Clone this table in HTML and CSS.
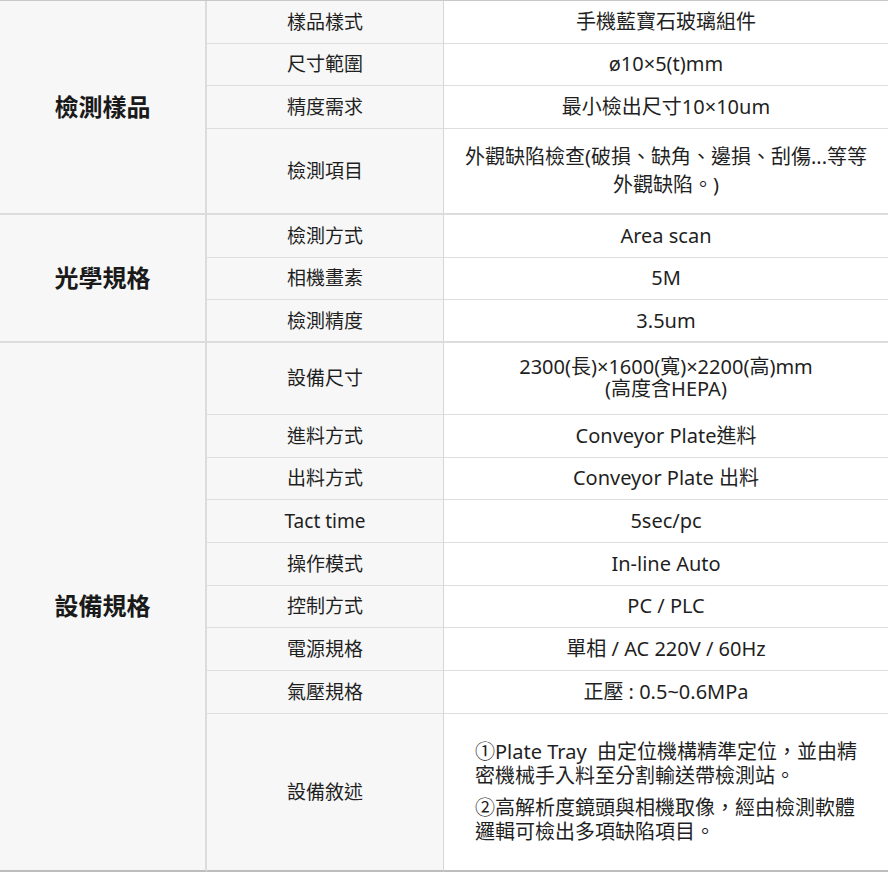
FILE: index.html
```html
<!DOCTYPE html>
<html lang="zh-Hant">
<head>
<meta charset="utf-8">
<title>規格表</title>
<link rel="stylesheet" href="styles.css">
</head>
<body>
<table class="spec">
  <tbody>
    <tr class="row">
      <td class="grp grp-end" rowspan="4">檢測樣品</td>
      <td class="key">樣品樣式</td>
      <td class="val">手機藍寶石玻璃組件</td>
    </tr>
    <tr class="row">
      <td class="key">尺寸範圍</td>
      <td class="val">ø10×5(t)mm</td>
    </tr>
    <tr class="row">
      <td class="key">精度需求</td>
      <td class="val">最小檢出尺寸10×10um</td>
    </tr>
    <tr class="row tall-a end">
      <td class="key">檢測項目</td>
      <td class="val multi">外觀缺陷檢查(破損、缺角、邊損、刮傷...等等<br>外觀缺陷。)</td>
    </tr>

    <tr class="row">
      <td class="grp grp-end" rowspan="3">光學規格</td>
      <td class="key">檢測方式</td>
      <td class="val">Area scan</td>
    </tr>
    <tr class="row">
      <td class="key">相機畫素</td>
      <td class="val">5M</td>
    </tr>
    <tr class="row end">
      <td class="key">檢測精度</td>
      <td class="val">3.5um</td>
    </tr>

    <tr class="row tall-b">
      <td class="grp grp-last" rowspan="9">設備規格</td>
      <td class="key">設備尺寸</td>
      <td class="val multi-s">2300(長)×1600(寬)×2200(高)mm<br>(高度含HEPA)</td>
    </tr>
    <tr class="row">
      <td class="key">進料方式</td>
      <td class="val">Conveyor Plate進料</td>
    </tr>
    <tr class="row">
      <td class="key">出料方式</td>
      <td class="val">Conveyor Plate 出料</td>
    </tr>
    <tr class="row">
      <td class="key">Tact time</td>
      <td class="val">5sec/pc</td>
    </tr>
    <tr class="row">
      <td class="key">操作模式</td>
      <td class="val">In-line Auto</td>
    </tr>
    <tr class="row">
      <td class="key">控制方式</td>
      <td class="val">PC / PLC</td>
    </tr>
    <tr class="row">
      <td class="key">電源規格</td>
      <td class="val">單相 / AC 220V / 60Hz</td>
    </tr>
    <tr class="row">
      <td class="key">氣壓規格</td>
      <td class="val">正壓 : 0.5~0.6MPa</td>
    </tr>
    <tr class="row tall-c last">
      <td class="key">設備敘述</td>
      <td class="val desc">
        <p>①Plate Tray&nbsp; 由定位機構精準定位，並由精<br>密機械手入料至分割輸送帶檢測站。</p>
        <p>②高解析度鏡頭與相機取像，經由檢測軟體<br>邏輯可檢出多項缺陷項目。</p>
      </td>
    </tr>
  </tbody>
</table>
</body>
</html>
```

FILE: styles.css
```css
html, body {
  margin: 0;
  padding: 0;
  background: #ffffff;
}

body {
  font-family: "Noto Sans", "Noto Sans CJK TC", sans-serif;
  color: #1f1f1f;
}

.spec {
  width: 888px;
  table-layout: fixed;
  border-collapse: separate;
  border-spacing: 0;
  border-top: 1px solid #c8c8c8;
  font-size: 19px;
}

.spec td {
  box-sizing: border-box;
  padding: 0;
  vertical-align: middle;
  text-align: center;
}

.row td {
  height: 42.67px;
  line-height: 22px;
}

.grp {
  width: 207px;
  background: #f7f7f7;
  border-right: 2px solid #dcdcdc;
  font-size: 24px;
  font-weight: 700;
  color: #1a1a1a;
}

.grp-end {
  border-bottom: 2px solid #dcdcdc;
}

.grp-last {
  border-bottom: 2px solid #bdbdbd;
}

.key {
  width: 237px;
  background: #f7f7f7;
  border-right: 1px solid #d6d6d6;
  border-bottom: 1px solid #dedede;
}

.val {
  width: 444px;
  background: #ffffff;
  border-bottom: 1px solid #dedede;
  font-size: 20px;
}

.end .key,
.end .val {
  border-bottom: 2px solid #dcdcdc;
}

.last .key,
.last .val {
  border-bottom: 2px solid #bdbdbd;
}

.row.tall-a td {
  height: 86px;
}

.row.tall-b td {
  height: 72px;
}

.row.tall-c td {
  height: 158px;
}

.val.multi {
  line-height: 28px;
  padding: 0 10px;
  white-space: nowrap;
}

.val.multi-s {
  line-height: 22px;
}

.val.desc {
  text-align: left;
  padding: 0 20px 0 31px;
  line-height: 24px;
  white-space: nowrap;
}

.desc p {
  margin: 0;
}

.desc p + p {
  margin-top: 8px;
}
```
